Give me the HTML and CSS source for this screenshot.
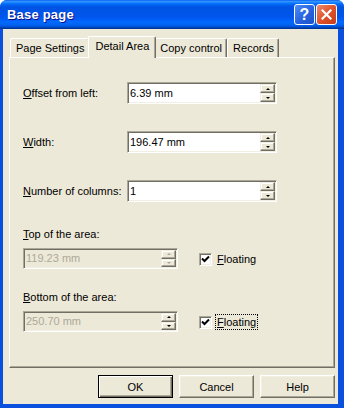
FILE: index.html
```html
<!DOCTYPE html>
<html lang="en">
<head>
    <meta charset="UTF-8">
    <title>Base page</title>
    <link rel="stylesheet" href="styles.css">
</head>
<body>
    <div class="window">
        <div class="titlebar">
            <span class="title">Base page</span>
            <div class="caption">
                <span class="cap-btn help">?</span>
                <span class="cap-btn close">
                    <svg width="11" height="11" viewBox="0 0 11 11"><path d="M1.5 1.5 L9.5 9.5 M9.5 1.5 L1.5 9.5" stroke="#fff" stroke-width="2.2" stroke-linecap="square"/></svg>
                </span>
            </div>
        </div>
        <div class="client">
            <div class="tabs">
                <div class="tab">Page Settings</div>
                <div class="tab active">Detail Area</div>
                <div class="tab">Copy control</div>
                <div class="tab">Records</div>
            </div>
            <div class="panel">
                <div class="row">
                    <span class="lbl"><u>O</u>ffset from left:</span>
                    <div class="spin">
                        <span class="field">6.39 mm</span>
                        <span class="arrows"><span class="arr up"></span><span class="arr down"></span></span>
                    </div>
                </div>
                <div class="row gap">
                    <span class="lbl"><u>W</u>idth:</span>
                    <div class="spin">
                        <span class="field">196.47 mm</span>
                        <span class="arrows"><span class="arr up"></span><span class="arr down"></span></span>
                    </div>
                </div>
                <div class="row gap">
                    <span class="lbl"><u>N</u>umber of columns:</span>
                    <div class="spin">
                        <span class="field">1</span>
                        <span class="arrows"><span class="arr up"></span><span class="arr down"></span></span>
                    </div>
                </div>

                <div class="group first">
                    <div class="glbl"><u>T</u>op of the area:</div>
                    <div class="row small">
                        <div class="spin off">
                            <span class="field">119.23 mm</span>
                            <span class="arrows"><span class="arr up"></span><span class="arr down"></span></span>
                        </div>
                        <span class="check"><svg width="9" height="9" viewBox="0 0 9 9"><path d="M1 3.5 L3.5 6 L8 1.5" fill="none" stroke="#000" stroke-width="2"/></svg></span>
                        <span class="chk-lbl"><u>F</u>loating</span>
                    </div>
                </div>
                <div class="group second">
                    <div class="glbl"><u>B</u>ottom of the area:</div>
                    <div class="row small">
                        <div class="spin off">
                            <span class="field">250.70 mm</span>
                            <span class="arrows"><span class="arr up dark"></span><span class="arr down dark"></span></span>
                        </div>
                        <span class="check"><svg width="9" height="9" viewBox="0 0 9 9"><path d="M1 3.5 L3.5 6 L8 1.5" fill="none" stroke="#000" stroke-width="2"/></svg></span>
                        <span class="chk-lbl focus"><u>F</u>loating</span>
                    </div>
                </div>
            </div>
            <div class="buttons">
                <button class="btn default">OK</button>
                <button class="btn">Cancel</button>
                <button class="btn">Help</button>
            </div>
        </div>
    </div>
</body>
</html>
```

FILE: styles.css
```css
body { margin: 0; font-family: "Liberation Sans", Arial, sans-serif; font-size: 11px; color: #000; }
.window { width: 344px; height: 408px; display: flex; flex-direction: column; background: #0A50DE; border-radius: 7px 7px 0 0; overflow: hidden; }

.titlebar {
    height: 29px; display: flex; align-items: center; justify-content: space-between; padding: 0 7px 0 7px;
    background: linear-gradient(#0058EE 0%, #3593FF 4%, #288EFF 7%, #127DFF 10%, #036FFC 13%, #0262EE 17%, #0057E5 22%, #0054E3 26%, #0055EB 56%, #005BF5 66%, #026AFE 76%, #0062EF 86%, #0052D6 92%, #0040AB 96%, #003092 100%);
}
.title { color: #fff; font-weight: bold; font-size: 13px; text-shadow: 1px 1px #0F1089; letter-spacing: 0.2px; }
.caption { display: flex; gap: 1px; }
.cap-btn {
    width: 19px; height: 19px; border: 1px solid #fff; border-radius: 3px; display: flex; align-items: center; justify-content: center;
    color: #fff; font-weight: bold; font-size: 16px;
}
.help { background: linear-gradient(135deg, #4F8CF6, #2662E0 55%, #1D52C9); }
.close { background: linear-gradient(135deg, #EC8A6C, #E0542C 50%, #C63C17); }

.client { flex: 1; margin: 0 6px 4px 3px; background: #ECE9D8; padding-top: 7px; display: flex; flex-direction: column; }

.tabs { display: flex; align-items: flex-end; height: 21px; padding-left: 7px; position: relative; z-index: 1; }
.tab {
    height: 19px; line-height: 18px; padding: 0 4px 0 5px; box-sizing: border-box; background: #ECE9D8;
    border-top: 1px solid #fff; border-left: 1px solid #fff; border-right: 1px solid #716F64;
    box-shadow: inset -1px 0 #ACA899; border-radius: 2px 2px 0 0;
}
.tab.active { height: 22px; line-height: 19px; margin: 0 -2px -1px -2px; padding: 0 6px 0 7px; position: relative; z-index: 2; }

.panel {
    margin: 0 3px 0 6px; height: 311px; box-sizing: border-box; background: #ECE9D8;
    border-top: 1px solid #fff; border-left: 1px solid #fff; border-right: 1px solid #716F64; border-bottom: 1px solid #716F64;
    box-shadow: inset -1px -1px #ACA899; padding: 24px 0 0 13px; display: flex; flex-direction: column;
}
.row { display: flex; align-items: center; height: 22px; }
.row.gap { margin-top: 27px; }
.lbl { width: 104px; }

.spin {
    display: flex; width: 150px; height: 22px; box-sizing: border-box; padding: 1px;
    border: 1px solid; border-color: #ACA899 #fff #fff #ACA899; box-shadow: inset 1px 1px #716F64, inset -1px -1px #F1EFE2;
}
.field { flex: 1; background: #fff; padding-left: 1px; line-height: 18px; white-space: nowrap; overflow: hidden; }
.arrows { width: 15px; display: flex; flex-direction: column; }
.arr {
    flex: 1; background: #ECE9D8; box-sizing: border-box; display: flex; align-items: center; justify-content: center;
    border: 1px solid; border-color: #F1EFE2 #716F64 #716F64 #F1EFE2; box-shadow: inset -1px -1px #ACA899, inset 1px 1px #fff;
}
.arr::after { content: ""; width: 0; height: 0; border-left: 2px solid transparent; border-right: 2px solid transparent; }
.arr.up::after { border-bottom: 2px solid #000; }
.arr.down::after { border-top: 2px solid #000; }

.spin.off { width: 155px; height: 21px; }
.spin.off .field { background: #ECE9D8; color: #ACA899; line-height: 17px; }
.spin.off .arr.up::after { border-bottom-color: #ACA899; }
.spin.off .arr.down::after { border-top-color: #ACA899; }
.spin.off .arr.dark.up::after { border-bottom-color: #000; }
.spin.off .arr.dark.down::after { border-top-color: #000; }

.group.first { margin-top: 26px; }
.group.second { margin-top: 22px; }
.glbl { height: 13px; line-height: 13px; }
.row.small { height: 21px; margin-top: 7px; }

.check {
    width: 13px; height: 13px; box-sizing: border-box; margin-left: 21px; background: #fff;
    border: 1px solid; border-color: #ACA899 #fff #fff #ACA899; box-shadow: inset 1px 1px #716F64, inset -1px -1px #F1EFE2;
    display: flex; align-items: center; justify-content: center; margin-top: 1px;
}
.chk-lbl { margin-left: 3px; padding: 1px 1px; border: 1px solid transparent; margin-top: 1px; }
.chk-lbl.focus { border: 1px dotted #000; }

.buttons { display: flex; justify-content: flex-end; gap: 6px; margin: 7px 3px 0 0; }
.btn {
    width: 75px; height: 23px; box-sizing: border-box; font-family: inherit; font-size: 11px; color: #000; background: #ECE9D8; padding: 0;
    border: 1px solid; border-color: #fff #716F64 #716F64 #fff; box-shadow: inset -1px -1px #ACA899, inset 1px 1px #F1EFE2;
}
.btn.default { border: 1px solid #000; box-shadow: inset 1px 1px #fff, inset -1px -1px #716F64, inset -2px -2px #ACA899; }
```
